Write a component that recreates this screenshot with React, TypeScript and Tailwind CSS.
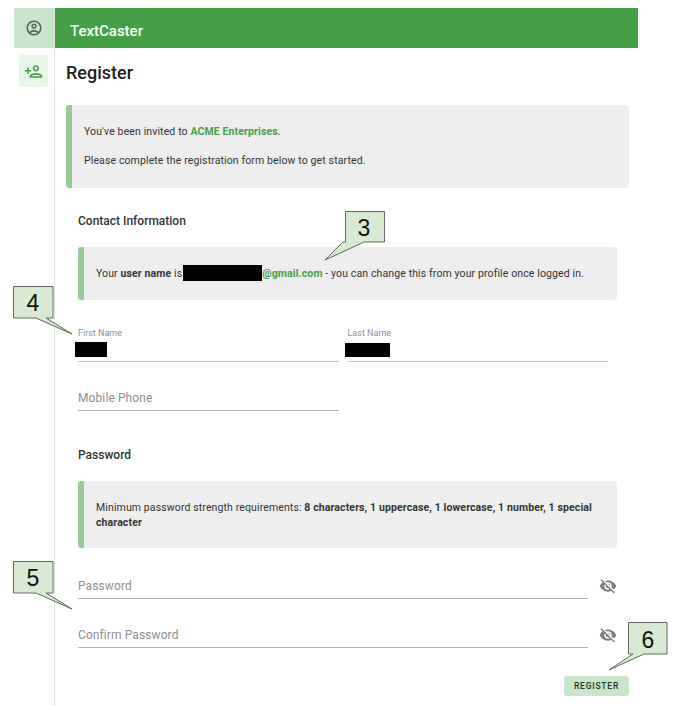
import { MdOutlineAccountCircle, MdOutlinePersonAdd, MdVisibilityOff } from 'react-icons/md';

function Notice({ className, children }: { className: string; children: React.ReactNode }) {
  return (
    <div className={`rounded-[3px] bg-[#eeeeee] border-l-[6px] border-[#96cb98] text-[10.5px] tracking-[0.12px] text-[#333333] ${className}`}>
      {children}
    </div>
  );
}

function Redacted({ className }: { className: string }) {
  return <span className={`absolute bg-black ${className}`} />;
}

interface TagProps {
  label: string;
  className: string;
  tail: string;
  width: number;
  height: number;
  textX: number;
  textY: number;
}

// numbered annotation bubbles pasted over the screenshot
function Tag({ label, className, tail, width, height, textX, textY }: TagProps) {
  return (
    <svg className={`absolute ${className}`} width={width} height={height} viewBox={`0 0 ${width} ${height}`}>
      <polygon points={tail} fill="#d9ead3" stroke="#5f6b5c" strokeWidth="1" />
      <text x={textX} y={textY} textAnchor="middle" fontSize="23" fill="#111111" fontFamily="'Liberation Sans', Arial, sans-serif">
        {label}
      </text>
    </svg>
  );
}

function Field({ label, className }: { label: string; className: string }) {
  return (
    <div className={`border-b border-[#b3b3b3] h-[26px] flex items-center text-[12px] tracking-[0.1px] text-[#8f8f8f] ${className}`}>
      {label}
    </div>
  );
}

function PasswordRow({ label, className }: { label: string; className: string }) {
  return (
    <div className={`flex items-center ${className}`}>
      <Field label={label} className="w-[510px]" />
      <MdVisibilityOff className="ml-[11px] text-[#7d7d7d]" size={18} />
    </div>
  );
}

export default function App() {
  return (
    <div className="relative h-[706px] w-[675px] overflow-hidden bg-white pl-[14px] pt-2 font-['Roboto',sans-serif]">
      <div className="flex w-[624px] h-full">
        <aside className="w-[41px] shrink-0 border-r border-[#e3e3e3] flex flex-col items-start">
          <div className="w-10 h-10 bg-[#c8e6c9] flex items-center justify-center text-[#555f55]">
            <MdOutlineAccountCircle size={18} />
          </div>
          <div className="ml-[5px] mt-[7px] w-[29px] h-[32px] rounded-[3px] bg-[#e8f5e9] flex items-center justify-center text-[#43a047]">
            <MdOutlinePersonAdd size={19} />
          </div>
        </aside>

        <main className="flex-1 min-w-0">
          <header className="h-10 bg-[#43a047] pl-[15px] pt-[6px] flex items-center text-[15px] font-medium text-white">
            TextCaster
          </header>

          <div className="pl-[11px] pr-[9px]">
            <h1 className="mt-[14px] text-[18px] leading-[22px] font-medium text-[#212121]">Register</h1>

            <Notice className="mt-[21px] h-[83px] pl-3 pt-[20px] leading-[13px]">
              <p>
                You've been invited to <b className="font-bold text-[#43a047]">ACME Enterprises</b>.
              </p>
              <p className="mt-4">Please complete the registration form below to get started.</p>
            </Notice>

            <div className="pl-3 pr-3">
              <h2 className="mt-[26px] text-[12px] leading-[14px] font-medium text-[#333333]">Contact Information</h2>

              <Notice className="relative mt-[19px] h-[53px] pl-3 flex items-center">
                <span>
                  Your <b className="font-bold">user name</b> is
                  <span className="inline-block w-[80px]" />
                  <b className="font-bold text-[#43a047]">@gmail.com</b> - you can change this from your profile once logged in.
                </span>
              </Notice>

              <div className="mt-[27px] flex gap-[9px] pr-[9px]">
                <div className="relative flex-1 h-[35px] border-b border-[#c4c4c4] text-[9px] leading-[12px] text-[#8f8f8f]">
                  First Name
                  <Redacted className="left-[-3px] top-[15px] w-8 h-[15px]" />
                </div>
                <div className="relative flex-1 h-[35px] border-b border-[#c4c4c4] text-[9px] leading-[12px] text-[#8f8f8f]">
                  Last Name
                  <Redacted className="left-[-3px] top-[16px] w-[45px] h-[14px]" />
                </div>
              </div>

              <Field label="Mobile Phone" className="mt-[23px] w-[261px]" />

              <h2 className="mt-[37px] text-[12px] leading-[14px] font-medium text-[#333333]">Password</h2>

              <Notice className="mt-[19px] h-[67px] pl-3 pr-4 flex items-center leading-[15px]">
                <span>
                  Minimum password strength requirements: <b className="font-bold">8 characters, 1 uppercase, 1 lowercase, 1 number, 1 special character</b>
                </span>
              </Notice>

              <PasswordRow label="Password" className="mt-[25px]" />
              <PasswordRow label="Confirm Password" className="mt-[23px]" />

              <div className="mt-[28px] -mr-3 flex justify-end">
                <button className="w-[65px] h-5 rounded-[3px] bg-[#c8e6c9] text-[8.5px] font-medium tracking-[0.8px] text-[#263226]">
                  REGISTER
                </button>
              </div>
            </div>
          </div>
        </main>
      </div>

      <Redacted className="left-[183px] top-[265px] w-[79px] h-4" />

      <Tag label="3" className="left-[324px] top-[210px]" width={62} height={52} textX={40} textY={26} tail="21.5,1.5 60.5,1.5 60.5,32 40,32 1,50 19,32 21.5,32" />
      <Tag label="4" className="left-[13px] top-[286px]" width={62} height={50} textX={20} textY={25} tail="0.5,0.5 40,0.5 40,32 33,32 59,48 23,32 0.5,32" />
      <Tag label="5" className="left-[13px] top-[561px]" width={62} height={50} textX={20} textY={25} tail="0.5,0.5 40,0.5 40,32 33,32 59,48 23,32 0.5,32" />
      <Tag label="6" className="left-[608px] top-[621px]" width={60} height={51} textX={40} textY={27} tail="20.5,1.5 59,1.5 59,33 36,33 1,49 25,33 20.5,33" />
    </div>
  );
}
